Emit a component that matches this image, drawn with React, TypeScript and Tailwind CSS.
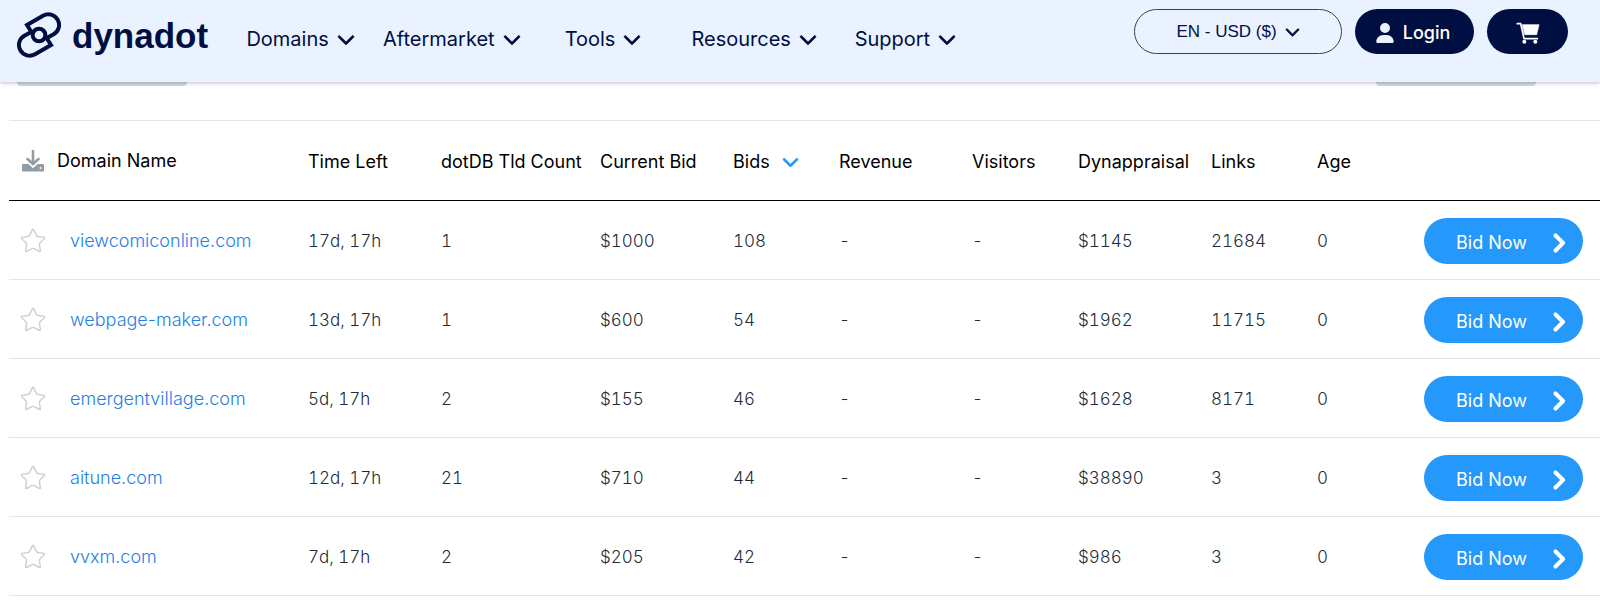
import { Star } from 'lucide-react';
import { FaChevronDown, FaChevronRight, FaUser } from 'react-icons/fa6';

const menu = ['Domains', 'Aftermarket', 'Tools', 'Resources', 'Support']

const headings = ['Time Left', 'dotDB Tld Count', 'Current Bid', 'Bids', 'Revenue', 'Visitors', 'Dynappraisal', 'Links', 'Age']

const auctions = [
  { domain: 'viewcomiconline.com', cells: ['17d, 17h', '1', '$1000', '108', '-', '-', '$1145', '21684', '0'] },
  { domain: 'webpage-maker.com', cells: ['13d, 17h', '1', '$600', '54', '-', '-', '$1962', '11715', '0'] },
  { domain: 'emergentvillage.com', cells: ['5d, 17h', '2', '$155', '46', '-', '-', '$1628', '8171', '0'] },
  { domain: 'aitune.com', cells: ['12d, 17h', '21', '$710', '44', '-', '-', '$38890', '3', '0'] },
  { domain: 'vvxm.com', cells: ['7d, 17h', '2', '$205', '42', '-', '-', '$986', '3', '0'] },
]

function Logo() {
  return <a href="#" className="flex items-center gap-[10px] text-[#000f41]">
    <svg width="46" height="46" viewBox="47 35 138 138" fill="none" stroke="currentColor" strokeWidth="12">
      <path d="M97 101 L80 74 L128 46 A32 32 0 0 1 160 102 L138 114" />
      <path d="M135 107 L152 134 L104 162 A32 32 0 0 1 72 106 L94 94" />
      <circle cx="116" cy="104" r="19" />
    </svg>
    <span className="pt-[2px] font-['Liberation_Sans',sans-serif] text-[35px] font-bold">dynadot</span>
  </a>
}

function DownloadIcon() {
  return <svg width="22" height="22" viewBox="0 0 22 22" fill="none">
    <rect y="14" width="22" height="7.500" rx="1" fill="#929ca6" />
    <path d="M5 9l6 5.500L17 9" stroke="#fff" strokeWidth="5.500" strokeLinecap="round" />
    <path d="M11 1v12.500M5.500 9l5.500 5 5.500-5" stroke="#929ca6" strokeWidth="2.600" strokeLinecap="round" />
    <circle cx="18.500" cy="18" r="1" fill="#fff" />
  </svg>
}

function CartIcon() {
  return <svg width="24" height="22" viewBox="0 0 72 66" fill="none" stroke="currentColor" strokeWidth="5" strokeLinecap="round" strokeLinejoin="round">
    <path d="M4 5h10l10 45h40" />
    <path d="M19 8h50l-7 30H26z" fill="currentColor" strokeWidth="2" />
    <circle cx="25" cy="59" r="6" fill="currentColor" stroke="none" />
    <circle cx="58" cy="59" r="6" fill="currentColor" stroke="none" />
  </svg>
}

function Header() {
  return <header className="relative flex h-[82px] items-start bg-[#ebf2ff] pr-8 pl-4 text-[#000f41] shadow-[0_1px_4px_rgba(0,0,0,0.25)]">
    <div className="flex h-[70px] w-[209px] items-center">
      <Logo />
    </div>
    <nav className="grid h-[78px] w-[756px] grid-cols-5">
      {menu.map(item => <button key={item} type="button" className="flex items-center justify-center gap-2 text-xl">
        {item}
        <FaChevronDown size={18} strokeWidth={20} />
      </button>)}
    </nav>
    <div className="ml-auto flex gap-[13px] pt-[9px]">
      <button type="button" className="flex h-[45px] w-[208px] items-center justify-center gap-2 rounded-full border border-[#333f67] font-['Liberation_Sans',sans-serif] text-[17px]">
        EN - USD ($)
        <FaChevronDown size={15} strokeWidth={20} />
      </button>
      <button type="button" className="flex h-[45px] w-[119px] items-center justify-center gap-2 rounded-full bg-[#000f41] pt-[2px] pr-1 text-lg font-medium text-white">
        <FaUser size={20} className="text-[#ebf2ff]" />
        Login
      </button>
      <button type="button" aria-label="Cart" className="flex h-[45px] w-[81px] items-center justify-center rounded-full bg-[#000f41] pt-[2px] text-white">
        <CartIcon />
      </button>
    </div>
  </header>
}

export default function App() {
  return <div className="bg-white font-[Inter,sans-serif]">
    <Header />
    <div className="flex h-[38px] justify-between pr-16 pl-[17px]">
      <div className="h-1 w-[170px] rounded-b-lg bg-[#d3d8e0]" />
      <div className="h-1 w-[160px] rounded-b-lg bg-[#d3d8e0]" />
    </div>
    <main className="pl-[9px]">
      <table className="w-full table-fixed border-separate border-spacing-0 border-t border-[#e2e4ec] text-left">
        <colgroup>
          <col />
          <col className="w-[133px]" />
          <col className="w-[159px]" />
          <col className="w-[133px]" />
          <col className="w-[106px]" />
          <col className="w-[133px]" />
          <col className="w-[106px]" />
          <col className="w-[133px]" />
          <col className="w-[106px]" />
          <col className="w-[107px]" />
          <col className="w-[176px]" />
        </colgroup>
        <thead>
          <tr className="text-lg whitespace-nowrap text-black">
            <th className="h-20 border-b border-black pl-[13px] font-normal">
              <div className="flex items-center gap-[13px]">
                <button type="button" aria-label="Download">
                  <DownloadIcon />
                </button>
                Domain Name
              </div>
            </th>
            {headings.map(heading => <th key={heading} className="border-b border-black pt-[2px] font-normal">
              {heading === 'Bids'
                ? <button type="button" className="flex items-center gap-3">
                  Bids
                  <FaChevronDown size={17} strokeWidth={20} className="text-[#2598fb]" />
                </button>
                : heading}
            </th>)}
            <th className="border-b border-black" />
          </tr>
        </thead>
        <tbody>
          {auctions.map(({ domain, cells }) => <tr key={domain} className="text-lg font-light text-[#222b36]">
            <td className="h-[79px] border-b border-[#e2e4ec] pt-[2px] pl-[10px]">
              <div className="flex items-center gap-[23px]">
                <button type="button" aria-label={`Watch ${domain}`}>
                  <Star size={28} strokeWidth={1.25} className="text-[#cdd0db]" />
                </button>
                <a href="#" className="text-[#1f7fe5]">{domain}</a>
              </div>
            </td>
            {cells.map((cell, i) => <td key={i} className="border-b border-[#e2e4ec] pt-[2px] text-[17px] tabular-nums">{cell}</td>)}
            <td className="border-b border-[#e2e4ec] pt-[2px]">
              <button type="button" className="flex h-[46px] w-[159px] items-center justify-between rounded-full bg-[#2598fb] pt-1 pr-[15px] pl-8 font-normal text-white">
                Bid Now
                <FaChevronRight size={20} strokeWidth={40} />
              </button>
            </td>
          </tr>)}
        </tbody>
      </table>
    </main>
  </div>
}
